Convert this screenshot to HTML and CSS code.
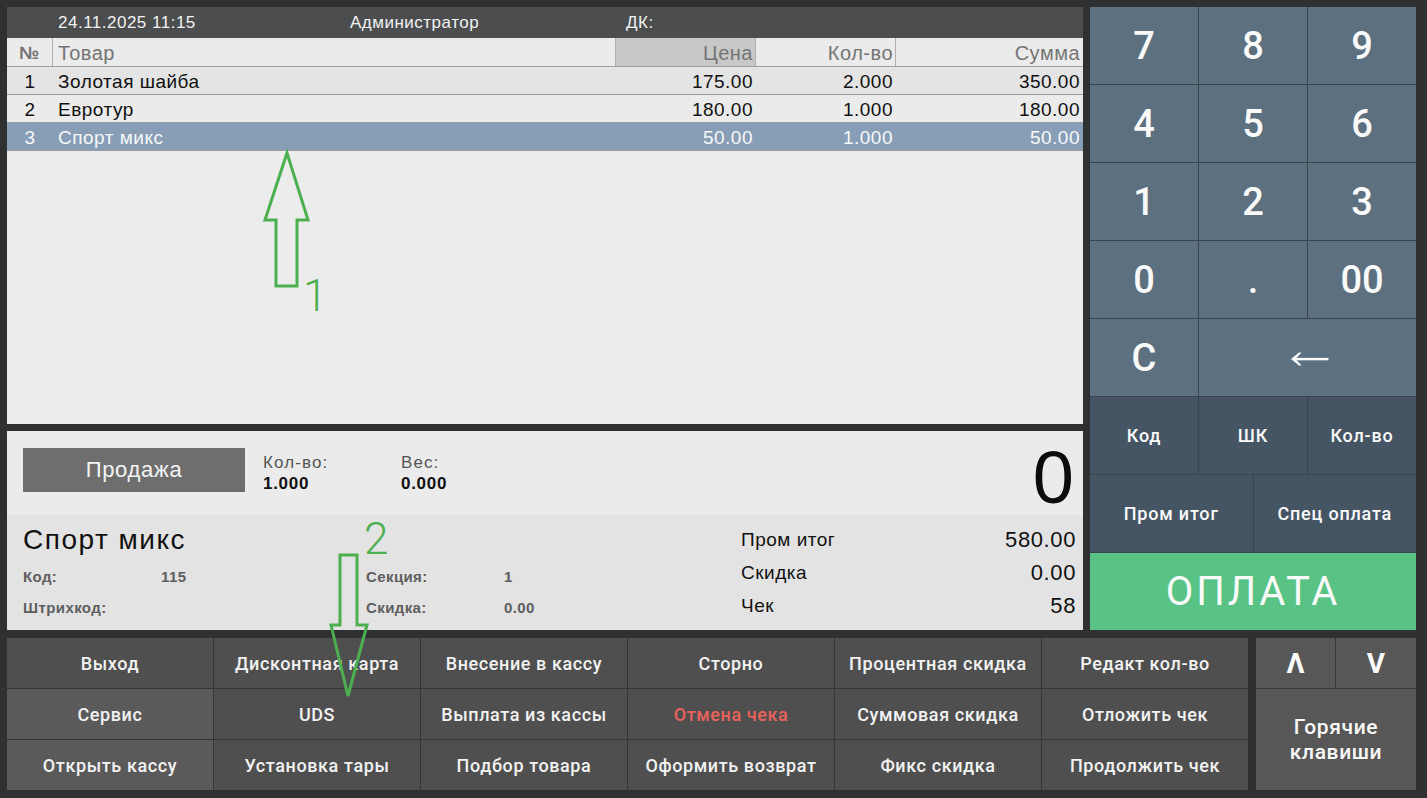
FILE: index.html
```html
<!DOCTYPE html>
<html lang="ru">
<head>
<meta charset="utf-8">
<title>Касса</title>
<link rel="stylesheet" href="styles.css">
</head>
<body>
<div class="app">
  <div class="left">
    <section class="receipt">
      <div class="topbar">
        <span></span>
        <span class="tb-date">24.11.2025 11:15</span>
        <span class="tb-user">Администратор</span>
        <span class="tb-dk">ДК:</span>
      </div>
      <div class="trow thead">
        <div class="c-n">№</div>
        <div class="c-name">Товар</div>
        <div class="c-num sorted">Цена</div>
        <div class="c-num">Кол-во</div>
        <div class="c-num last">Сумма</div>
      </div>
      <div class="trow r1">
        <div class="c-n">1</div>
        <div class="c-name">Золотая шайба</div>
        <div class="c-num">175.00</div>
        <div class="c-num">2.000</div>
        <div class="c-num last">350.00</div>
      </div>
      <div class="trow r2">
        <div class="c-n">2</div>
        <div class="c-name">Евротур</div>
        <div class="c-num">180.00</div>
        <div class="c-num">1.000</div>
        <div class="c-num last">180.00</div>
      </div>
      <div class="trow sel">
        <div class="c-n">3</div>
        <div class="c-name">Спорт микс</div>
        <div class="c-num">50.00</div>
        <div class="c-num">1.000</div>
        <div class="c-num last">50.00</div>
      </div>
    </section>
    <section class="info">
      <div class="info-top">
        <div class="mode">Продажа</div>
        <div class="stat"><div class="stat-l">Кол-во:</div><div class="stat-v">1.000</div></div>
        <div class="stat"><div class="stat-l">Вес:</div><div class="stat-v">0.000</div></div>
        <div class="big">0</div>
      </div>
      <div class="info-bottom">
        <div class="item">
          <div class="item-name">Спорт микс</div>
          <div class="props">
            <span>Код:</span><span>115</span><span>Секция:</span><span>1</span>
            <span>Штрихкод:</span><span></span><span>Скидка:</span><span>0.00</span>
          </div>
        </div>
        <div class="totals">
          <span>Пром итог</span><span class="tv">580.00</span>
          <span>Скидка</span><span class="tv">0.00</span>
          <span>Чек</span><span class="tv">58</span>
        </div>
      </div>
    </section>
  </div>

  <div class="keypad">
    <div class="k d">7</div><div class="k d">8</div><div class="k d">9</div>
    <div class="k d">4</div><div class="k d">5</div><div class="k d">6</div>
    <div class="k d">1</div><div class="k d">2</div><div class="k d">3</div>
    <div class="k d">0</div><div class="k d">.</div><div class="k d">00</div>
    <div class="k d">C</div>
    <div class="k d back" aria-label="Backspace">
      <svg class="bs" width="38" height="14" viewBox="0 0 38 14">
        <rect x="4" y="5.9" width="33.5" height="2.4" fill="#fafafa"/>
        <polygon points="0,7.1 8,0.6 10.6,0.6 4.6,7.1 10.6,13.6 8,13.6" fill="#fafafa"/>
      </svg>
    </div>
    <div class="k f">Код</div><div class="k f">ШК</div><div class="k f">Кол-во</div>
    <div class="k f half">Пром итог</div><div class="k f half">Спец оплата</div>
    <div class="k pay">ОПЛАТА</div>
  </div>

  <div class="bottom">
    <div class="fkeys">
      <div class="b">Выход</div>
      <div class="b">Дисконтная карта</div>
      <div class="b">Внесение в кассу</div>
      <div class="b">Сторно</div>
      <div class="b">Процентная скидка</div>
      <div class="b">Редакт кол-во</div>
      <div class="b light">Сервис</div>
      <div class="b">UDS</div>
      <div class="b">Выплата из кассы</div>
      <div class="b red">Отмена чека</div>
      <div class="b">Суммовая скидка</div>
      <div class="b">Отложить чек</div>
      <div class="b light">Открыть кассу</div>
      <div class="b">Установка тары</div>
      <div class="b">Подбор товара</div>
      <div class="b">Оформить возврат</div>
      <div class="b">Фикс скидка</div>
      <div class="b">Продолжить чек</div>
    </div>
    <div class="nav">
      <div class="n arrow">Λ</div>
      <div class="n arrow">V</div>
      <div class="n hot">Горячие<br>клавиши</div>
    </div>
  </div>
</div>

<svg class="marks" width="1427" height="798" viewBox="0 0 1427 798">
  <polygon class="arr" points="287,153 308,220 297,220 297,286 276,286 276,220 265,220"/>
  <text class="num" x="303" y="311">1</text>
  <polygon class="arr" points="340,555 357,555 357,625 367,625 348,696 331,625 340,625"/>
  <text class="num" x="364" y="554">2</text>
</svg>
</body>
</html>
```

FILE: styles.css
```css
* { box-sizing: border-box; }

html, body {
  margin: 0;
  padding: 0;
  background: #2e3031;
  width: 1427px;
  height: 798px;
  overflow: hidden;
  font-family: "Liberation Sans", Arial, sans-serif;
}

.app {
  padding: 7px 11px 8px 7px;
  display: grid;
  grid-template-columns: 1076px 326px;
  grid-template-rows: 623px 152px;
  column-gap: 7px;
  row-gap: 8px;
}

.left {
  display: flex;
  flex-direction: column;
  gap: 7px;
}

/* receipt table */
.receipt {
  height: 417px;
  background: #ececec;
}

.topbar {
  height: 31px;
  background: #4b4d4f;
  color: #f2f2f2;
  font-size: 17px;
  letter-spacing: 0.5px;
  display: grid;
  grid-template-columns: 51px 292px 276px 1fr;
  align-items: center;
  padding-top: 1px;
}

.trow {
  display: grid;
  grid-template-columns: 46px 562px 140px 140px 188px;
  height: 28px;
  border-bottom: 1px solid #9c9c9c;
  font-size: 19px;
  letter-spacing: 0.5px;
  color: #111;
  align-items: stretch;
}

.trow > div {
  display: flex;
  align-items: center;
  padding-top: 2px;
}

.c-n { justify-content: center; }
.c-name { padding-left: 5px; }
.c-num { justify-content: flex-end; padding-right: 2px; }
.c-num.last { padding-right: 3px; }

.thead {
  height: 29px;
  background: #ebebeb;
  color: #747474;
  font-size: 20px;
  letter-spacing: 0.5px;
  border-bottom: 1px solid #a0a0a0;
}
.thead .c-n { border-right: 1px solid #b0b0b0; font-weight: bold; font-size: 18px; }
.thead .c-num { border-left: 1px solid #b0b0b0; }
.thead .sorted { background: #c8c8c8; }

.r1 { background: #e4e4e4; }
.r2 { background: #ebebeb; }
.sel { background: #889db6; color: #f6f8fb; }

/* info panel */
.info {
  height: 199px;
  display: flex;
  flex-direction: column;
}

.info-top {
  height: 84px;
  background: #ebebeb;
  display: flex;
  align-items: flex-start;
  padding: 17px 9px 0 16px;
}

.mode {
  width: 222px;
  height: 44px;
  background: #6e6e6e;
  color: #f4f4f4;
  font-size: 22px;
  letter-spacing: 0.7px;
  display: flex;
  align-items: center;
  justify-content: center;
  margin-right: 18px;
}

.stat {
  width: 138px;
  padding-top: 4px;
}
.stat-l { font-size: 17px; letter-spacing: 1.1px; color: #555; line-height: 21px; }
.stat-v { font-size: 17px; letter-spacing: 0.7px; font-weight: bold; color: #111; line-height: 21px; }

.big {
  margin-left: auto;
  font-size: 74px;
  line-height: 74px;
  color: #0c0c0c;
  margin-top: -7px;
}

.info-bottom {
  flex: 1;
  background: #e3e3e3;
  display: flex;
}

.item {
  flex: 1;
  padding: 10px 0 0 16px;
}

.item-name {
  font-size: 28px;
  letter-spacing: 1.5px;
  line-height: 30px;
  color: #111;
}

.props {
  margin-top: 6px;
  display: grid;
  grid-template-columns: 138px 205px 138px 1fr;
  grid-auto-rows: 31px;
  align-items: center;
  font-size: 15px;
  letter-spacing: 0.4px;
  color: #5e5e5e;
  font-weight: bold;
}

.totals {
  width: 335px;
  margin-right: 7px;
  padding-top: 8px;
  display: grid;
  grid-template-columns: 1fr auto;
  grid-auto-rows: 33px;
  align-items: center;
  font-size: 19px;
  letter-spacing: 0.5px;
  color: #111;
}
.tv { text-align: right; font-size: 22px; letter-spacing: 0.6px; }

/* keypad */
.keypad {
  display: grid;
  grid-template-columns: repeat(6, 1fr);
  grid-template-rows: repeat(8, 1fr);
  gap: 1px;
  background: #38444f;
  font-family: Roboto, "Liberation Sans", sans-serif;
}

.k {
  grid-column: span 2;
  display: flex;
  align-items: center;
  justify-content: center;
  color: #fafafa;
}
.k.d {
  background: #5c7080;
  font-size: 38px;
  font-weight: 500;
}
.k.back {
  grid-column: span 4;
  padding-left: 4px;
  padding-top: 3px;
}
.bs { display: block; }
.k.f {
  background: #465564;
  font-size: 18px;
  letter-spacing: 0.8px;
  font-weight: 500;
}
.k.half { grid-column: span 3; }
.k.pay {
  grid-column: span 6;
  background: #58c385;
  font-size: 40px;
  font-weight: 400;
  letter-spacing: 3px;
}

/* bottom function keys */
.bottom {
  grid-column: 1 / span 2;
  display: flex;
  gap: 8px;
  font-family: Roboto, "Liberation Sans", sans-serif;
}

.fkeys {
  width: 1241px;
  display: grid;
  grid-template-columns: repeat(6, 1fr);
  grid-template-rows: repeat(3, 1fr);
  gap: 1px;
  background: #363636;
}

.b {
  background: #4f4f4f;
  color: #f2f2f2;
  font-size: 18px;
  letter-spacing: 0.6px;
  font-weight: 500;
  display: flex;
  align-items: center;
  justify-content: center;
}
.b.light { background: #5a5a5a; }
.b.red { color: #ea625b; }

.nav {
  width: 160px;
  display: grid;
  grid-template-columns: 79px 80px;
  grid-template-rows: 50px 1fr;
  gap: 1px;
  background: #3a3a3a;
}

.n {
  background: #575757;
  color: #fafafa;
  display: flex;
  align-items: center;
  justify-content: center;
}
.n.arrow {
  font-size: 28px;
  font-weight: bold;
}
.n.hot {
  grid-column: span 2;
  font-size: 21px;
  letter-spacing: 0.6px;
  font-weight: 500;
  line-height: 25px;
  text-align: center;
}

/* annotation overlay */
.marks {
  position: absolute;
  left: 0;
  top: 0;
  pointer-events: none;
}
.arr {
  fill: none;
  stroke: #4caf50;
  stroke-width: 3;
  stroke-linejoin: miter;
}
.num {
  fill: #4caf50;
  font-family: Roboto, "Liberation Sans", sans-serif;
  font-size: 44px;
  font-weight: 300;
}
```
